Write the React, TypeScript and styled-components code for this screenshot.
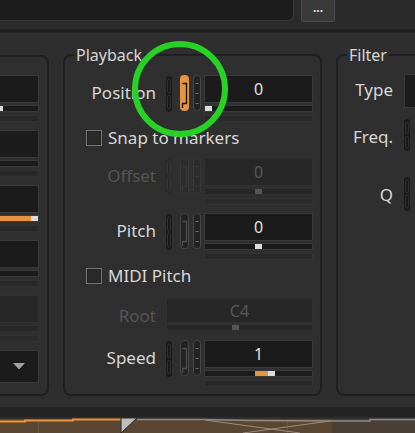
import React from "react";
import styled, { createGlobalStyle } from "styled-components";

const GlobalStyle = createGlobalStyle`
  html, body { margin: 0; padding: 0; background: #2e2e2e; }
  body { font-family: "Noto Sans", "Open Sans", sans-serif; color: #d6d6d6; overflow: hidden; }
  * { box-sizing: border-box; }
`;

const Page = styled.div`
  position: relative;
  width: 415px;
  height: 433px;
  overflow: hidden;
  display: flex;
  flex-direction: column;
  background: #2e2e2e;
`;

const TopBar = styled.div`
  height: 29px;
  flex: none;
  background: #2b2b2b;
  display: flex;
  align-items: flex-start;
  gap: 7px;
`;

const PathField = styled.div`
  width: 294px;
  height: 21px;
  background: #1c1c1c;
  border: 1px solid #3b3b3b;
  border-top: none;
  border-left: none;
  border-bottom-right-radius: 6px;
`;

const MoreButton = styled.button`
  width: 34px;
  height: 22px;
  padding: 0 0 6px;
  background: #3a3a3a;
  border: 1px solid #4a4a4a;
  border-top: none;
  border-radius: 0 0 2px 2px;
  color: #e4e4e4;
  font-family: "Noto Sans", sans-serif;
  font-size: 12px;
  font-weight: 700;
  line-height: 12px;
`;

const Divider = styled.div`
  height: 4px;
  flex: none;
  background: #1f1f1f;
  border-bottom: 1px solid #262626;
`;

const Panels = styled.div`
  height: 374px;
  flex: none;
  display: flex;
  gap: 14px;
  padding: 11px 0;
  overflow: hidden;
`;

const Group = styled.fieldset<{ $width?: number; $offset?: number; $noLegend?: boolean }>`
  margin: ${(p) => (p.$noLegend ? "11px" : "0")} 0 0 ${(p) => p.$offset ?? 0}px;
  padding: 0;
  min-width: 0;
  flex: ${(p) => (p.$width ? "none" : "1 0 auto")};
  width: ${(p) => (p.$width ? `${p.$width}px` : "auto")};
  border: 2px solid #1f1f1f;
  border-radius: 8px;
  background: #2f2f2f;
`;

const Legend = styled.legend`
  margin-left: 9px;
  padding: 0 2px;
  font-size: 16px;
  line-height: 22px;
  color: #d6d6d6;
`;

const LeftBody = styled.div`
  padding: 18px 8px 0 0;
  display: flex;
  flex-direction: column;
  align-items: flex-end;
  gap: 8px;
`;

const MidBody = styled.div`
  padding-top: 9px;
  display: flex;
  flex-direction: column;
  gap: 8px;
`;

const Row = styled.div`
  display: flex;
  align-items: flex-start;
`;

const Label = styled.div<{ $disabled?: boolean }>`
  width: 91px;
  height: 34px;
  flex: none;
  display: flex;
  align-items: center;
  justify-content: flex-end;
  font-size: 17px;
  color: ${(p) => (p.$disabled ? "#555555" : "#d8d8d8")};
`;

const Pills = styled.div`
  display: flex;
  margin: 0 3px 0 10px;
  flex: none;
`;

const CheckRow = styled.label<{ $pad: number }>`
  display: flex;
  align-items: center;
  gap: 6px;
  padding-left: 21px;
  padding-bottom: ${(p) => p.$pad}px;
  font-size: 17px;
  line-height: 16px;
  color: #d8d8d8;
`;

const Check = styled.span`
  width: 16px;
  height: 16px;
  flex: none;
  border: 1px solid #767676;
  background: #2a2a2a;
  box-shadow: inset 0 0 0 1px #232323;
`;

const Control = styled.div<{ $w: number; $ml?: number }>`
  width: ${(p) => p.$w}px;
  margin-left: ${(p) => p.$ml ?? 0}px;
  flex: none;
  display: flex;
  flex-direction: column;
`;

const ValueBox = styled.div<{ $disabled?: boolean; $h?: number }>`
  height: ${(p) => p.$h ?? 28}px;
  background: ${(p) => (p.$disabled ? "#272727" : "#1b1b1b")};
  border: 1px solid ${(p) => (p.$disabled ? "#313131" : "#3a3a3a")};
  color: ${(p) => (p.$disabled ? "#585858" : "#e2e2e2")};
  display: flex;
  align-items: center;
  justify-content: center;
  font-size: 16px;
`;

const Track = styled.div<{ $disabled?: boolean; $gap?: number }>`
  position: relative;
  height: 7px;
  margin-top: ${(p) => p.$gap ?? 2}px;
  background: ${(p) => (p.$disabled ? "#272727" : "#1b1b1b")};
  border: 1px solid ${(p) => (p.$disabled ? "#313131" : "#393939")};
`;

const Fill = styled.div`
  position: absolute;
  top: 0;
  bottom: 0;
  background: #e8933e;
`;

const Thumb = styled.div<{ $disabled?: boolean }>`
  position: absolute;
  top: 0;
  bottom: 0;
  width: 7px;
  background: ${(p) => (p.$disabled ? "#555555" : "#dcdcdc")};
`;

const Bar = styled.div<{ $disabled?: boolean }>`
  height: 7px;
  margin-top: 3px;
  background: ${(p) => (p.$disabled ? "#2b2b2b" : "#282828")};
  border: 1px solid #333333;
`;

const Dropdown = styled.div`
  width: 109px;
  height: 33px;
  background: #1b1b1b;
  border: 1px solid #3a3a3a;
  display: flex;
  align-items: center;
  justify-content: flex-end;
  padding-right: 13px;
`;

const RightBody = styled.div`
  padding-top: 8px;
  display: flex;
  flex-direction: column;
`;

const FRow = styled.div<{ $mt: number }>`
  display: flex;
  align-items: flex-start;
  gap: 11px;
  margin-top: ${(p) => p.$mt}px;
`;

const FLabel = styled.div<{ $h: number }>`
  width: 55px;
  height: ${(p) => p.$h}px;
  flex: none;
  display: flex;
  align-items: center;
  justify-content: flex-end;
  font-size: 17px;
  color: #d8d8d8;
`;

const Combo = styled.div`
  width: 60px;
  height: 34px;
  background: #1b1b1b;
  border: 1px solid #3a3a3a;
`;

const Bottom = styled.div`
  height: 10px;
  flex: none;
  background: #232323;
`;

const Wave = styled.svg`
  display: block;
  flex: none;
`;

const Highlight = styled.svg`
  position: absolute;
  left: 128px;
  top: 37px;
  width: 104px;
  height: 104px;
  pointer-events: none;
`;

type PillProps = { disabled?: boolean; active?: boolean; h?: number };

const PillA = ({ disabled, h = 36 }: PillProps) => (
  <svg width="6" height={h} viewBox={`0 0 6 ${h}`} style={{ marginTop: disabled ? 0 : 1 }}>
    <rect x="0" y="0" width="6" height={h} rx="3" fill={disabled ? "#2b2b2b" : "#1b1b1b"} />
    <path
      d={`M1.5 4 Q3 2 4.5 4 V${h / 2 - 2} Q3 ${h / 2} 1.5 ${h / 2 - 2} Z M1.5 ${h / 2 + 2} Q3 ${h / 2} 4.5 ${h / 2 + 2} V${h - 4} Q3 ${h - 2} 1.5 ${h - 4} Z`}
      fill="none"
      stroke={disabled ? "#353535" : "#2e2e2e"}
      strokeWidth="1"
    />
  </svg>
);

const PillB = ({ disabled, active }: PillProps) => {
  const fill = active ? "#e8933e" : disabled ? "#2c2c2c" : "#232323";
  const stroke = active ? "#e8933e" : disabled ? "#383838" : "#474747";
  const line = active ? "#111111" : disabled ? "#383838" : "#4e4e4e";
  return (
    <svg width="9" height="36" viewBox="0 0 9 36" style={{ marginLeft: 8 }}>
      <rect x="0.5" y="0.5" width="8" height="35" rx="3" fill={fill} stroke={stroke} />
      <path d="M2.5 8.5 H6.5 V28.5 H2.5 V33" fill="none" stroke={line} strokeWidth="1.3" />
    </svg>
  );
};

const PillC = ({ disabled }: PillProps) => (
  <svg width="8" height="36" viewBox="0 0 8 36" style={{ marginLeft: 4 }}>
    <rect x="0.5" y="0.5" width="7" height="35" rx="3" fill={disabled ? "#2c2c2c" : "#222222"} stroke={disabled ? "#383838" : "#474747"} />
    {[8.5, 18.5, 28.5].map((y) => (
      <line key={y} x1="2.5" x2="5.5" y1={y} y2={y} stroke={disabled ? "#3a3a3a" : "#6e6e6e"} strokeWidth="1" />
    ))}
  </svg>
);

type SliderProps = {
  width: number;
  value: number; // 0..1
  from?: number;
  disabled?: boolean;
  text?: string;
  boxH?: number;
  gap?: number;
  bar?: boolean;
  ml?: number;
};

const Slider = ({ width, value, from, disabled, text, boxH, gap, bar = true, ml }: SliderProps) => {
  const inner = width - 2;
  const thumbLeft = Math.round(value * (inner - 7));
  const fromLeft = from !== undefined ? Math.round(from * (inner - 7)) : null;
  return (
    <Control $w={width} $ml={ml}>
      <ValueBox $disabled={disabled} $h={boxH}>{text}</ValueBox>
      <Track $disabled={disabled} $gap={gap}>
        {fromLeft !== null && (
          <Fill style={{ left: Math.min(fromLeft, thumbLeft), width: Math.abs(thumbLeft - fromLeft) }} />
        )}
        <Thumb $disabled={disabled} style={{ left: thumbLeft }} />
      </Track>
      {bar && <Bar $disabled={disabled} />}
    </Control>
  );
};

export default function App() {
  return (
    <Page>
      <GlobalStyle />
      <TopBar>
        <PathField />
        <MoreButton>...</MoreButton>
      </TopBar>
      <Divider />
      <Panels>
        <Group $width={111} $offset={-62} $noLegend>
          <LeftBody>
            <Slider width={109} value={0.65} />
            <Slider width={109} value={0.2} />
            <Slider width={109} value={1} from={0.3} />
            <Slider width={109} value={0.2} />
            <Slider width={109} value={0.2} disabled />
            <Dropdown>
              <svg width="12" height="7" viewBox="0 0 12 7">
                <path d="M0 0 H12 L6 6.5 Z" fill="#a2a2a2" />
              </svg>
            </Dropdown>
          </LeftBody>
        </Group>

        <Group $width={259}>
          <Legend>Playback</Legend>
          <MidBody>
            <Row>
              <Label>Position</Label>
              <Pills>
                <PillA />
                <PillB active />
                <PillC />
              </Pills>
              <Slider width={109} value={0} text="0" />
            </Row>
            <CheckRow $pad={4}>
              <Check />
              Snap to markers
            </CheckRow>
            <Row>
              <Label $disabled>Offset</Label>
              <Pills>
                <PillA disabled />
                <PillB disabled />
                <PillC disabled />
              </Pills>
              <Slider width={109} value={0.5} text="0" disabled />
            </Row>
            <Row>
              <Label>Pitch</Label>
              <Pills>
                <PillA />
                <PillB />
                <PillC />
              </Pills>
              <Slider width={109} value={0.5} text="0" />
            </Row>
            <CheckRow $pad={6}>
              <Check />
              MIDI Pitch
            </CheckRow>
            <Row>
              <Label $disabled>Root</Label>
              <Slider width={147} ml={10} value={60 / 127} text="C4" disabled boxH={25} gap={1} bar={false} />
            </Row>
            <Row>
              <Label>Speed</Label>
              <Pills>
                <PillA />
                <PillB />
                <PillC />
              </Pills>
              <Slider width={109} value={0.63} from={0.5} text="1" />
            </Row>
          </MidBody>
        </Group>

        <Group>
          <Legend>Filter</Legend>
          <RightBody>
            <FRow $mt={0}>
              <FLabel $h={30}>Type</FLabel>
              <Combo />
            </FRow>
            <FRow $mt={10}>
              <FLabel $h={36}>Freq.</FLabel>
              <PillA h={32} />
            </FRow>
            <FRow $mt={22}>
              <FLabel $h={36}>Q</FLabel>
              <PillA h={34} />
            </FRow>
          </RightBody>
        </Group>
      </Panels>
      <Bottom />
      <Wave width="415" height="16" viewBox="0 0 415 16">
        <rect x="0" y="2" width="332" height="14" fill="#5a4633" />
        <rect x="332" y="2" width="83" height="14" fill="#4a3f35" />
        <line x1="38.5" x2="38.5" y1="3" y2="16" stroke="#6a5442" strokeWidth="1" />
        <line x1="287.5" x2="287.5" y1="3" y2="16" stroke="#665240" strokeWidth="1" />
        <polyline points="0,4.5 25,4.5 25,3.5 73,3.5 73,2.5 121,2.5" fill="none" stroke="#f0923a" strokeWidth="2" />
        <polyline points="137,2.5 205,2.5 250,3.5 330,4 370,4 370,2.5 415,2.5" fill="none" stroke="#8e8a86" strokeWidth="1.5" />
        <line x1="205" y1="3" x2="300" y2="16" stroke="#9c8c7c" strokeWidth="1" />
        <line x1="243" y1="16" x2="330" y2="4" stroke="#9c8c7c" strokeWidth="1" />
        <polygon points="121,1 137,1 121,16" fill="#bdbdbd" stroke="#2a2a2a" strokeWidth="1" />
      </Wave>
      <Highlight viewBox="0 0 104 104">
        <circle cx="52" cy="52" r="45" fill="none" stroke="#27d125" strokeWidth="6" />
      </Highlight>
    </Page>
  );
}
